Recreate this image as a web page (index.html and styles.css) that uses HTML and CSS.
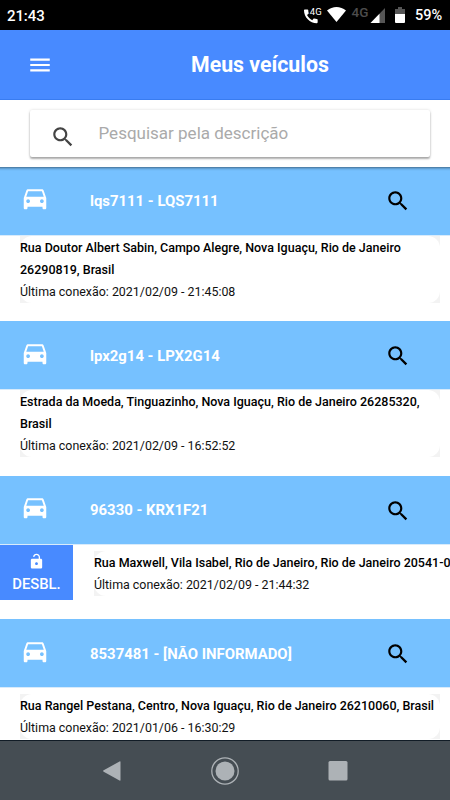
FILE: index.html
```
<!DOCTYPE html>
<html lang="pt-BR">
    <head>
    <title>Meus veículos</title>
    <meta charset="UTF-8">
    <meta name="viewport" content="width=device-width, initial-scale=1.0">

    <link rel="stylesheet" href="styles.css">
    </head>

    <body>
        <!-- icones reutilizados na lista -->
        <svg class="simbolos">
            <symbol id="carro" viewBox="0 0 24 24">
                <path d="M18.92 6.01C18.72 5.42 18.16 5 17.5 5h-11c-.66 0-1.21.42-1.42 1.01L3 12v8c0 .55.45 1 1 1h1c.55 0 1-.45 1-1v-1h12v1c0 .55.45 1 1 1h1c.55 0 1-.45 1-1v-8l-2.08-5.99zM6.5 16c-.83 0-1.5-.67-1.5-1.5S5.67 13 6.5 13s1.5.67 1.5 1.5S7.33 16 6.5 16zm11 0c-.83 0-1.5-.67-1.5-1.5s.67-1.5 1.5-1.5 1.5.67 1.5 1.5-.67 1.5-1.5 1.5zM5 11l1.5-4.5h11L19 11H5z"/>
            </symbol>
            <symbol id="lupa" viewBox="0 0 24 24">
                <path d="M15.5 14h-.79l-.28-.27C15.41 12.59 16 11.11 16 9.5 16 5.91 13.09 3 9.5 3S3 5.91 3 9.5 5.91 16 9.5 16c1.61 0 3.09-.59 4.23-1.57l.27.28v.79l5 4.99L20.49 19l-4.99-5zm-6 0C7.01 14 5 11.99 5 9.5S7.01 5 9.5 5 14 7.01 14 9.5 11.99 14 9.5 14z"/>
            </symbol>
        </svg>

        <div class="tela">
            <div class="status">
                <span class="hora">21:43</span>
                <svg class="status-icones" width="85" height="30" viewBox="0 0 85 30">
                    <path fill="#fff" transform="translate(.7 7.2) scale(.76)" d="M20.01 15.380c-1.230 0-2.420-.2-3.530-.560-.350-.120-.740-.030-1.010.240l-1.570 1.970c-2.830-1.350-5.480-3.900-6.890-6.830l1.950-1.660c.270-.280.350-.670.240-1.020-.370-1.110-.560-2.300-.560-3.530 0-.540-.450-.990-.990-.990H4.190C3.650 3 3 3.240 3 3.990 3 13.280 10.730 21 20.010 21c.710 0 .990-.630.990-1.180v-3.450c0-.540-.450-.990-.990-.990z"/>
                    <text class="rede-chamada" x="8.800" y="15">4G</text>
                    <path fill="#fff" d="M26 10.500c5.500-4.800 13.500-4.800 19 0L35.500 22z"/>
                    <text class="rede" x="50.500" y="17">4G</text>
                    <path fill="#555" d="M84 8v15H69.500z"/>
                    <path fill="#fff" d="M78.500 13.700V23h-9z"/>
                </svg>
                <svg class="bateria" width="10" height="18" viewBox="0 0 10 18">
                    <path fill="#555" d="M3 1h4v2h3v5H0V3h3z"/>
                    <path fill="#fff" d="M0 8h10v8q0 1-1 1H1q-1 0-1-1z"/>
                </svg>
                <span class="porcento">59%</span>
            </div>

            <div class="topo">
                <svg class="menu" viewBox="0 0 24 24"><path d="M3 18h18v-2H3v2zm0-5h18v-2H3v2zm0-7v2h18V6H3z"/></svg>
                <h1 class="titulo">Meus veículos</h1>
            </div>

            <div class="pesquisa">
                <div class="pesquisa-caixa">
                    <svg class="pesquisa-lupa"><use href="#lupa"/></svg>
                    <input class="pesquisa-texto" type="text" placeholder="Pesquisar pela descrição">
                </div>
            </div>

            <div class="lista">
                <div class="veiculo">
                    <div class="veiculo-topo">
                        <svg class="carro"><use href="#carro"/></svg>
                        <span class="nome">lqs7111 - LQS7111</span>
                        <svg class="lupa"><use href="#lupa"/></svg>
                    </div>
                    <div class="fundo">
                        <div class="dados">
                            <p class="endereco">Rua Doutor Albert Sabin, Campo Alegre, Nova Iguaçu, Rio de Janeiro<br>26290819, Brasil</p>
                            <p class="conexao">Última conexão: 2021/02/09 - 21:45:08</p>
                        </div>
                    </div>
                </div>

                <div class="veiculo">
                    <div class="veiculo-topo">
                        <svg class="carro"><use href="#carro"/></svg>
                        <span class="nome">lpx2g14 - LPX2G14</span>
                        <svg class="lupa"><use href="#lupa"/></svg>
                    </div>
                    <div class="fundo">
                        <div class="dados">
                            <p class="endereco">Estrada da Moeda, Tinguazinho, Nova Iguaçu, Rio de Janeiro 26285320,<br>Brasil</p>
                            <p class="conexao">Última conexão: 2021/02/09 - 16:52:52</p>
                        </div>
                    </div>
                </div>

                <div class="veiculo veiculo-bloqueado">
                    <div class="veiculo-topo">
                        <svg class="carro"><use href="#carro"/></svg>
                        <span class="nome">96330 - KRX1F21</span>
                        <svg class="lupa"><use href="#lupa"/></svg>
                    </div>
                    <div class="linha">
                        <button class="desbloquear">
                            <svg class="cadeado" viewBox="0 0 24 24"><path d="M18 8h-1V6c0-2.760-2.240-5-5-5-2.500 0-4.550 1.820-4.930 4.200l1.950.3C9.260 4.070 10.500 2.900 12 2.900c1.710 0 3.100 1.390 3.100 3.100v2H6c-1.100 0-2 .9-2 2v10c0 1.100.9 2 2 2h12c1.100 0 2-.9 2-2V10c0-1.100-.9-2-2-2zm-6 9c-1.100 0-2-.9-2-2s.9-2 2-2 2 .9 2 2-.9 2-2 2z"/></svg>
                            DESBL.
                        </button>
                        <div class="fundo">
                            <div class="dados">
                                <p class="endereco">Rua Maxwell, Vila Isabel, Rio de Janeiro, Rio de Janeiro 20541-0</p>
                                <p class="conexao">Última conexão: 2021/02/09 - 21:44:32</p>
                            </div>
                        </div>
                    </div>
                </div>

                <div class="veiculo veiculo-curto">
                    <div class="veiculo-topo">
                        <svg class="carro"><use href="#carro"/></svg>
                        <span class="nome">8537481 - [NÃO INFORMADO]</span>
                        <svg class="lupa"><use href="#lupa"/></svg>
                    </div>
                    <div class="fundo">
                        <div class="dados">
                            <p class="endereco">Rua Rangel Pestana, Centro, Nova Iguaçu, Rio de Janeiro 26210060, Brasil</p>
                            <p class="conexao">Última conexão: 2021/01/06 - 16:30:29</p>
                        </div>
                    </div>
                </div>
            </div>

            <div class="navegacao">
                <svg width="30" height="30" viewBox="0 0 30 30"><path d="M5.700 14.300 21.500 5.500q1-.5 1 .5v18q0 1-1 .5L5.700 15.700q-1.200-.7 0-1.400z"/></svg>
                <svg width="30" height="30" viewBox="0 0 30 30"><circle class="anel" cx="15" cy="15" r="13.200"/><circle cx="15" cy="15" r="9.500"/></svg>
                <svg width="30" height="30" viewBox="0 0 30 30"><rect x="5.500" y="5" width="19" height="19.500" rx="1.500"/></svg>
            </div>
        </div>
    </body>
</html>
```
FILE: styles.css
```
*{
    box-sizing: border-box;
}

body{
    margin: 0;
    font-family: Roboto, "Liberation Sans", sans-serif;
    background-color: white;
    overflow: hidden;
}

p, h1{
    margin: 0;
}

svg{
    display: block;
    flex: none;
}

.simbolos{
    width: 0;
    height: 0;
    display: none;
}

.tela{
    width: 450px;
    height: 800px;
    display: flex;
    flex-direction: column;
    overflow: hidden;
}

.status{
    height: 30px;
    flex: none;
    display: flex;
    align-items: center;
    padding: 0 8px 0 7px;
    background-color: black;
    color: white;
    font-size: 15px;
    font-weight: 500;
}

.hora{
    flex: 1;
    padding-top: 1px;
    letter-spacing: -0.1px;
}

.status-icones{
    margin-right: 9px;
}

.rede-chamada{
    font-size: 9.5px;
    font-weight: 400;
    fill: white;
}

.rede{
    font-size: 13.5px;
    fill: #4c4c4c;
}

.bateria{
    margin-right: 10px;
}

.porcento{
    width: 27px;
    padding-top: 1px;
    font-size: 14.5px;
    white-space: nowrap;
}

.topo{
    height: 70px;
    flex: none;
    display: flex;
    align-items: center;
    padding-left: 27px;
    background-color: #488aff;
    border-bottom: 1px solid #397cf0;
}

.menu{
    width: 26px;
    height: 26px;
    fill: white;
}

.titulo{
    margin-left: 138px;
    color: white;
    font-size: 21.3px;
    font-weight: 700;
}

.pesquisa{
    height: 67px;
    flex: none;
    padding: 10px 20px 0 30px;
}

.pesquisa-caixa{
    width: 400px;
    height: 47px;
    display: flex;
    align-items: center;
    padding-left: 20px;
    background-color: white;
    border-radius: 2px;
    box-shadow: 0 2px 2px rgba(0, 0, 0, 0.3), 0 0 3px rgba(0, 0, 0, 0.15);
}

.pesquisa-lupa{
    width: 26px;
    height: 26px;
    margin-top: 6px;
    fill: #444;
}

.pesquisa-texto{
    width: 300px;
    margin-left: 22.5px;
    margin-bottom: 2px;
    padding: 0;
    border: none;
    outline: none;
    background: none;
    font-family: inherit;
    font-size: 17px;
}

.pesquisa-texto::placeholder{
    color: #aaa;
}

.lista{
    flex: 1;
    min-height: 0;
    overflow: hidden;
}

.veiculo{
    height: 154.5px;
}

.veiculo-bloqueado{
    height: 143.5px;
}

.veiculo-topo{
    height: 69px;
    display: flex;
    align-items: center;
    padding-top: 1px;
    padding-left: 20px;
    background-color: #76c1ff;
    border-bottom: 1px solid #d8ebfb;
}

.veiculo:first-child{
    height: 154px;
}

.veiculo:first-child .veiculo-topo{
    height: 68.5px;
    padding-top: 0;
    box-shadow: inset 0 4px 3px -3px rgba(0, 0, 0, 0.5);
}

.carro{
    width: 30px;
    height: 30px;
    margin-bottom: 6px;
    fill: white;
}

.nome{
    width: 295px;
    margin-left: 40px;
    color: white;
    font-size: 14.9px;
    font-weight: 700;
}

.lupa{
    width: 26px;
    height: 26px;
    margin-top: 1px;
    fill: black;
}

/* cantos cinza claros por tras do cartao arredondado */
.fundo{
    width: 420px;
    margin-left: 20px;
    background-color: #f3f3f3;
}

.dados{
    padding-top: 1px;
    background-color: white;
    border-radius: 12px;
    font-size: 12.5px;
    line-height: 22px;
    white-space: nowrap;
}

.endereco{
    color: black;
    font-weight: 500;
}

.conexao{
    color: #111;
    font-size: 12.42px;
}

.linha{
    display: flex;
    align-items: flex-start;
}

.linha .fundo{
    margin-top: 6px;
    flex: none;
}

.desbloquear{
    width: 73px;
    height: 55px;
    flex: none;
    display: flex;
    flex-direction: column;
    align-items: center;
    margin-right: 1px;
    padding: 8px 0 0;
    border: none;
    background-color: #488aff;
    color: white;
    font-family: inherit;
    font-size: 14.8px;
    font-weight: 500;
}

.cadeado{
    width: 17px;
    height: 17px;
    margin-bottom: 5px;
    fill: white;
}

.veiculo-curto .fundo{
    margin-top: 6px;
}

.navegacao{
    height: 60px;
    flex: none;
    display: flex;
    justify-content: center;
    align-items: center;
    gap: 82.5px;
    background-color: #454d53;
    border-top: 1px solid #111c26;
    fill: #adb2b6;
}

.anel{
    fill: none;
    stroke: #adb2b6;
    stroke-width: 1.300;
}
```
